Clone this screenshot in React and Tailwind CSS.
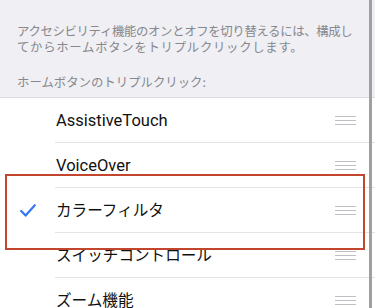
import React from "react";

const rows = [
  { label: "AssistiveTouch", latin: true },
  { label: "VoiceOver", latin: true },
  { label: "カラーフィルタ", checked: true },
  { label: "スイッチコントロール" },
  { label: "ズーム機能" },
];

function Handle() {
  return (
    <div className="flex flex-col gap-[3px] w-[21px] mr-[19px]">
      <div className="h-px bg-[#c0c0c4]" />
      <div className="h-px bg-[#c0c0c4]" />
      <div className="h-px bg-[#c0c0c4]" />
    </div>
  );
}

function Check() {
  return (
    <svg width="16" height="13" viewBox="0 0 16 13" className="block">
      <polyline
        points="1.2,7 5.6,11.6 14.8,1.2"
        fill="none"
        stroke="#3478f6"
        strokeWidth="2.2"
        strokeLinecap="round"
        strokeLinejoin="round"
      />
    </svg>
  );
}

export default function App() {
  return (
    <div
      className="relative w-[375px] h-[308px] overflow-hidden bg-white"
      style={{ fontFamily: '"Roboto", "Noto Sans CJK JP", sans-serif' }}
    >
      <div
        className="bg-[#efeff4] h-[98px] pl-[17px] pt-[23px] text-[12.4px] leading-[16px] text-[#87878c] border-b border-[#dcdce0] whitespace-nowrap"
        style={{ fontFamily: '"Noto Sans CJK JP", sans-serif' }}
      >
        <p>
          <span className="tracking-[-0.35px]">アクセシビリティ機能のオンとオフを切り替えるには、構成し</span>
          <br />
          <span className="tracking-[0.7px]">てからホームボタンをトリプルクリックします。</span>
        </p>
        <p className="mt-[19px]">ホームボタンのトリプルクリック:</p>
      </div>
      <div className="flex flex-col">
        {rows.map((r) => (
          <div key={r.label} className="flex h-[45px] items-stretch">
            <div className="w-[55px] flex items-center justify-center pl-[1px] pb-[1px]">
              {r.checked ? <Check /> : null}
            </div>
            <div className="flex-1 flex items-center justify-between border-b border-[#e4e4e6]">
              <span
                className={
                  r.latin
                    ? "text-[16.5px] text-[#111] pl-[1px] pt-[3px]"
                    : "text-[15.6px] text-[#111] pl-[1px] pt-[3px]"
                }
              >
                {r.label}
              </span>
              <Handle />
            </div>
          </div>
        ))}
      </div>
      <div className="absolute left-[5px] top-[174px] w-[360px] h-[76px] border-2 border-[#c2462e]" />
      <div className="absolute left-[369px] top-0 w-[3px] h-[308px] bg-[#a0a0a2]" />
    </div>
  );
}
